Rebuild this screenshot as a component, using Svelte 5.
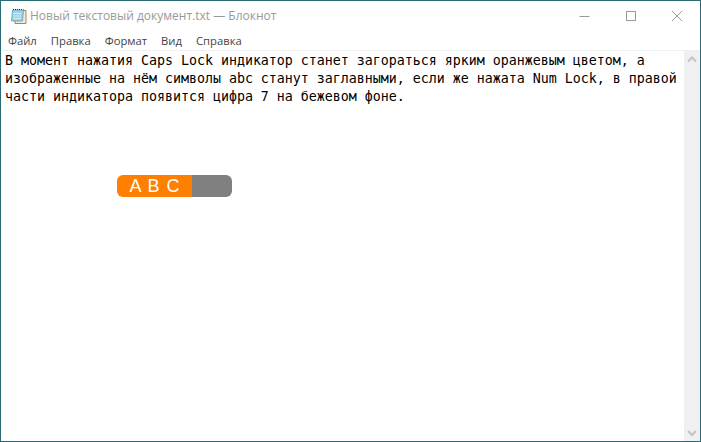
<script>
  const menu = ['Файл', 'Правка', 'Формат', 'Вид', 'Справка'];
</script>

<div class="window">
  <header class="titlebar">
    <svg class="app-icon" width="18" height="18" viewBox="0 0 18 18">
      <path d="M5 3.500h11v13H5z" fill="#f3ead2" stroke="#9a8a5c" />
      <path d="M2.500 3h11l-1 11h-11z" fill="#9fd0e4" stroke="#5f9db8" stroke-width="0.8" />
      <path d="M3.500 6.500h8M3.200 9h8M3 11.500h8" stroke="#d6edf6" stroke-width="1" />
      <path d="M3 2.500h10.500" stroke="#333" stroke-width="1.200" stroke-dasharray="1 1" />
    </svg>
    <span class="title">Новый текстовый документ.txt — Блокнот</span>
    <div class="controls">
      <svg width="46" height="30" viewBox="0 0 46 30"><path d="M17.500 15.500h10" stroke="#999" /></svg>
      <svg width="46" height="30" viewBox="0 0 46 30"><rect x="18.500" y="10.500" width="9" height="9" fill="none" stroke="#999" /></svg>
      <svg width="46" height="30" viewBox="0 0 46 30"><path d="M18 10l10 10M28 10L18 20" stroke="#999" fill="none" /></svg>
    </div>
  </header>

  <nav class="menubar">
    {#each menu as item}
      <span>{item}</span>
    {/each}
  </nav>

  <div class="body">
    <div class="editor">
      <p class="text">В момент нажатия Caps Lock индикатор станет загораться ярким оранжевым цветом, а<br />изображенные на нём символы abc станут заглавными, если же нажата Num Lock, в правой<br />части индикатора появится цифра 7 на бежевом фоне.</p>
      <div class="indicator">
        <div class="caps">A B C</div>
        <div class="num"></div>
      </div>
    </div>
    <div class="scrollbar">
      <svg width="16" height="17" viewBox="0 0 16 17"><path d="M4 10.500l4-4 4 4" fill="none" stroke="#c4c4c4" stroke-width="2" /></svg>
      <svg width="16" height="17" viewBox="0 0 16 17"><path d="M4 7l4 4 4-4" fill="none" stroke="#c4c4c4" stroke-width="2" /></svg>
    </div>
  </div>
</div>

<style>
  :global(body) {
    margin: 0;
    background: #fff;
  }

  .window {
    width: 701px;
    height: 442px;
    box-sizing: border-box;
    border: 1px solid #2a6b75;
    display: flex;
    flex-direction: column;
    background: #fff;
    overflow: hidden;
  }

  .titlebar {
    height: 29px;
    flex: none;
    display: flex;
    align-items: center;
    padding-left: 9px;
  }

  .app-icon {
    flex: none;
  }

  .title {
    margin-left: 2px;
    font: 12px "Open Sans", sans-serif;
    color: #999;
  }

  .controls {
    margin-left: auto;
    display: flex;
    height: 30px;
  }

  .menubar {
    height: 20px;
    flex: none;
    display: flex;
    align-items: center;
    gap: 14px;
    padding-left: 7px;
    font: 11.25px "Open Sans", sans-serif;
    color: #444;
    border-bottom: 1px solid #f0f0f0;
  }

  .body {
    flex: 1;
    display: flex;
    min-height: 0;
  }

  .editor {
    flex: 1;
    padding-left: 4px;
  }

  .text {
    margin: 1px 0 0;
    font: 13.29px/18px "DejaVu Sans Mono", monospace;
    color: #000;
    white-space: nowrap;
  }

  .indicator {
    margin: 69px 0 0 112px;
    width: 115px;
    height: 22px;
    display: flex;
    border-radius: 6px;
    overflow: hidden;
  }

  .caps {
    width: 75px;
    box-sizing: border-box;
    padding-left: 1px;
    background: #ff8000;
    color: #fff;
    font: 18px/22px "Liberation Sans", sans-serif;
    text-align: center;
    letter-spacing: 1px;
  }

  .num {
    flex: 1;
    background: #808080;
  }

  .scrollbar {
    width: 16px;
    flex: none;
    background: #f0f0f0;
    display: flex;
    flex-direction: column;
    justify-content: space-between;
  }
</style>
